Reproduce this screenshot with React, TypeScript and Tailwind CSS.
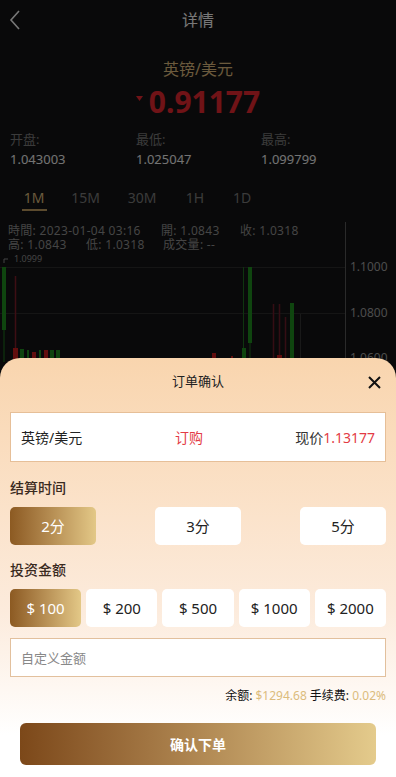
import { useState } from 'react';

const durations = ['2分', '3分', '5分'];
const amounts = ['$ 100', '$ 200', '$ 500', '$ 1000', '$ 2000'];
const tabs = [
  { label: '1M', box: 'w-[28px]' },
  { label: '15M', box: 'w-[75px]' },
  { label: '30M', box: 'w-[38px]' },
  { label: '1H', box: 'w-[68px]' },
  { label: '1D', box: 'w-[26px]' },
];

function Chart() {
  return (
    <div className="relative h-[140px] w-full">
      <svg className="absolute inset-0" width="396" height="140" viewBox="0 0 396 140">
        {/* axis + grid */}
        <line x1="345.5" y1="0" x2="345.5" y2="140" stroke="#555" strokeWidth="1" />
        <line x1="0" y1="45.5" x2="345" y2="45.5" stroke="#2a2a2a" strokeWidth="1" />
        <line x1="0" y1="91.5" x2="345" y2="91.5" stroke="#2a2a2a" strokeWidth="1" />
        <text x="350" y="49" fill="#999" fontSize="12" fontFamily="Noto Sans, sans-serif">1.1000</text>
        <text x="350" y="95" fill="#999" fontSize="12" fontFamily="Noto Sans, sans-serif">1.0800</text>
        <text x="350" y="140" fill="#999" fontSize="12" fontFamily="Noto Sans, sans-serif">1.0600</text>
        <path d="M4 41 V37 H8" stroke="#888" fill="none" strokeWidth="1" />
        <text x="14" y="40" fill="#888" fontSize="9" fontFamily="Noto Sans, sans-serif">1.0999</text>
        {/* candles */}
        <line x1="4" y1="45" x2="4" y2="140" stroke="#1e7a1e" strokeWidth="1" />
        <rect x="2" y="45" width="4" height="63" fill="#1f8a1f" />
        <line x1="15.5" y1="54" x2="15.5" y2="140" stroke="#7a1c28" strokeWidth="1.5" />
        <rect x="13" y="126" width="5" height="14" fill="#c41d1d" />
        <rect x="20" y="127" width="4" height="13" fill="#1f8a1f" />
        <rect x="27" y="128" width="2" height="12" fill="#1f8a1f" />
        <rect x="32" y="130" width="4" height="10" fill="#c41d1d" />
        <rect x="39" y="128" width="2" height="12" fill="#1f8a1f" />
        <rect x="44" y="128" width="4" height="12" fill="#c41d1d" />
        <rect x="50" y="128" width="4" height="12" fill="#1f8a1f" />
        <rect x="56" y="128" width="4" height="12" fill="#1f8a1f" />
        <rect x="212" y="131" width="4" height="9" fill="#c41d1d" />
        <rect x="231" y="134" width="2" height="6" fill="#c41d1d" />
        <line x1="243.5" y1="45" x2="243.5" y2="140" stroke="#1e6a1e" strokeWidth="1" />
        <rect x="242" y="126" width="4" height="14" fill="#1f8a1f" />
        <rect x="248" y="45" width="4" height="76" fill="#1f8a1f" />
        <line x1="250" y1="121" x2="250" y2="140" stroke="#1e6a1e" strokeWidth="1" />
        <line x1="273.5" y1="82" x2="273.5" y2="140" stroke="#6a1a28" strokeWidth="1.5" />
        <line x1="279.5" y1="82" x2="279.5" y2="140" stroke="#6a1a28" strokeWidth="1.5" />
        <rect x="277" y="133" width="5" height="7" fill="#c41d1d" />
        <line x1="285.5" y1="95" x2="285.5" y2="140" stroke="#6a1a28" strokeWidth="1.5" />
        <rect x="290" y="81" width="4" height="59" fill="#1f8a1f" />
        <line x1="300.5" y1="92" x2="300.5" y2="140" stroke="#333" strokeWidth="1" />
      </svg>
      <div className="absolute left-[8px] top-[2px] text-[12px] leading-[13.5px] tracking-[0.3px] text-[#8a8a8a]">
        <div className="flex whitespace-nowrap">
          <span className="w-[153px]">時間: 2023-01-04 03:16</span>
          <span className="w-[79px]">開: 1.0843</span>
          <span>收: 1.0318</span>
        </div>
        <div className="flex whitespace-nowrap">
          <span className="w-[78px]">高: 1.0843</span>
          <span className="w-[77px]">低: 1.0318</span>
          <span>成交量: --</span>
        </div>
      </div>
    </div>
  );
}

export default function App() {
  const [duration, setDuration] = useState(0);
  const [amount, setAmount] = useState(0);

  return (
    <div className="relative h-[777px] w-[396px] overflow-hidden bg-[#131314] font-['Noto_Sans','Noto_Sans_CJK_SC',sans-serif]">
      {/* underlying detail page */}
      <div className="flex flex-col">
        <div className="relative flex h-[40px] items-center justify-center">
          <svg className="absolute left-[9px] top-[10px]" width="12" height="20" viewBox="0 0 12 20">
            <path d="M10 1 L2 10 L10 19" stroke="#eee" strokeWidth="1.6" fill="none" />
          </svg>
          <span className="text-[16px] text-[#f0f0f0]">详情</span>
        </div>
        <div className="mt-[18px] text-center text-[16px] leading-[22px] text-[#d6b47a]">英镑/美元</div>
        <div className="mt-[4px] flex items-center justify-center">
          <svg width="7" height="5" viewBox="0 0 7 5" className="mr-[6px] mt-[-7px]">
            <path d="M0 0 H7 L3.5 5 Z" fill="#e0262e" />
          </svg>
          <span className="text-[30px] font-bold leading-[36px] text-[#e0262e]">0.91177</span>
        </div>
        <div className="mt-[10px] flex pl-[10px] text-[13px]">
          <div className="flex w-[126px] flex-col gap-[2px]">
            <span className="leading-[18px] text-[#777]">开盘:</span>
            <span className="leading-[18px] text-[#e6e6e6]">1.043003</span>
          </div>
          <div className="flex w-[125px] flex-col gap-[2px]">
            <span className="leading-[18px] text-[#777]">最低:</span>
            <span className="leading-[18px] text-[#e6e6e6]">1.025047</span>
          </div>
          <div className="flex flex-col gap-[2px]">
            <span className="leading-[18px] text-[#777]">最高:</span>
            <span className="leading-[18px] text-[#e6e6e6]">1.099799</span>
          </div>
        </div>
        <div className="mt-[21px] flex pl-[20px] text-[14px]">
          {tabs.map((t, i) => (
            <div key={t.label} className={`flex flex-col ${t.box} items-center`}>
              <span className={`whitespace-nowrap leading-[18px] ${i === 0 ? 'text-[#d6b47a]' : 'text-[#777]'}`}>
                {t.label}
              </span>
              <span className={`mt-[2px] h-[2px] w-[25px] ${i === 0 ? 'bg-[#b8975c]' : 'bg-transparent'}`} />
            </div>
          ))}
        </div>
        <div className="mt-[11px]">
          <Chart />
        </div>
      </div>

      {/* mask */}
      <div className="absolute inset-0 bg-black/50" />

      {/* order sheet */}
      <div className="absolute inset-x-0 bottom-0 h-[419px] rounded-t-[20px] bg-gradient-to-b from-[#f9d5ae] via-[#fcebdc] via-60% to-white to-90%">
        <div className="relative flex h-[48px] items-center justify-center">
          <span className="text-[13px] text-[#222]">订单确认</span>
          <svg className="absolute right-[15px] top-[18px]" width="13" height="13" viewBox="0 0 13 13">
            <path d="M1 1 L12 12 M12 1 L1 12" stroke="#111" strokeWidth="2" />
          </svg>
        </div>
        <div className="mx-[10px] mt-[6px] flex h-[50px] items-center border border-[#e6bf98] bg-white px-[10px] text-[14px]">
          <span className="w-[154px] text-[#222]">英镑/美元</span>
          <span className="text-[#e33b45]">订购</span>
          <span className="ml-auto text-right text-[#333]">
            现价<span className="text-[#e33b45]">1.13177</span>
          </span>
        </div>
        <div className="mx-[10px] mt-[16px] text-[14px] font-medium leading-[20px] text-[#3a2a1e]">结算时间</div>
        <div className="mx-[10px] mt-[9px] flex justify-between">
          {durations.map((d, i) => (
            <button
              key={d}
              type="button"
              onClick={() => setDuration(i)}
              className={`h-[38px] w-[86px] rounded-[5px] text-[15px] ${
                duration === i
                  ? 'bg-gradient-to-r from-[#8c5a22] to-[#e3c887] text-white'
                  : 'bg-white text-[#222]'
              }`}
            >
              {d}
            </button>
          ))}
        </div>
        <div className="mx-[10px] mt-[15px] text-[14px] font-medium leading-[20px] text-[#3a2a1e]">投资金额</div>
        <div className="mx-[10px] mt-[9px] grid grid-cols-5 gap-[5px]">
          {amounts.map((a, i) => (
            <button
              key={a}
              type="button"
              onClick={() => setAmount(i)}
              className={`h-[38px] rounded-[5px] text-[15px] ${
                amount === i
                  ? 'bg-gradient-to-r from-[#8c5a22] to-[#e3c887] text-white'
                  : 'bg-white text-[#222]'
              }`}
            >
              {a}
            </button>
          ))}
        </div>
        <input
          placeholder="自定义金额"
          className="mx-[10px] mt-[11px] h-[39px] w-[376px] border border-[#e2c09d] bg-white px-[10px] text-[13px] text-[#333] outline-none placeholder:text-[#888]"
        />
        <div className="mx-[10px] mt-[10px] text-right text-[12px] leading-[18px] text-[#111]">
          余额: <span className="text-[#dcbc7c]">$1294.68</span> 手续费: <span className="text-[#dcbc7c]">0.02%</span>
        </div>
        <button
          type="button"
          className="mx-[20px] mt-[18px] h-[42px] w-[356px] rounded-[6px] bg-gradient-to-r from-[#7c4819] to-[#e4cb8c] text-[14px] font-bold text-white"
        >
          确认下单
        </button>
      </div>
    </div>
  );
}
